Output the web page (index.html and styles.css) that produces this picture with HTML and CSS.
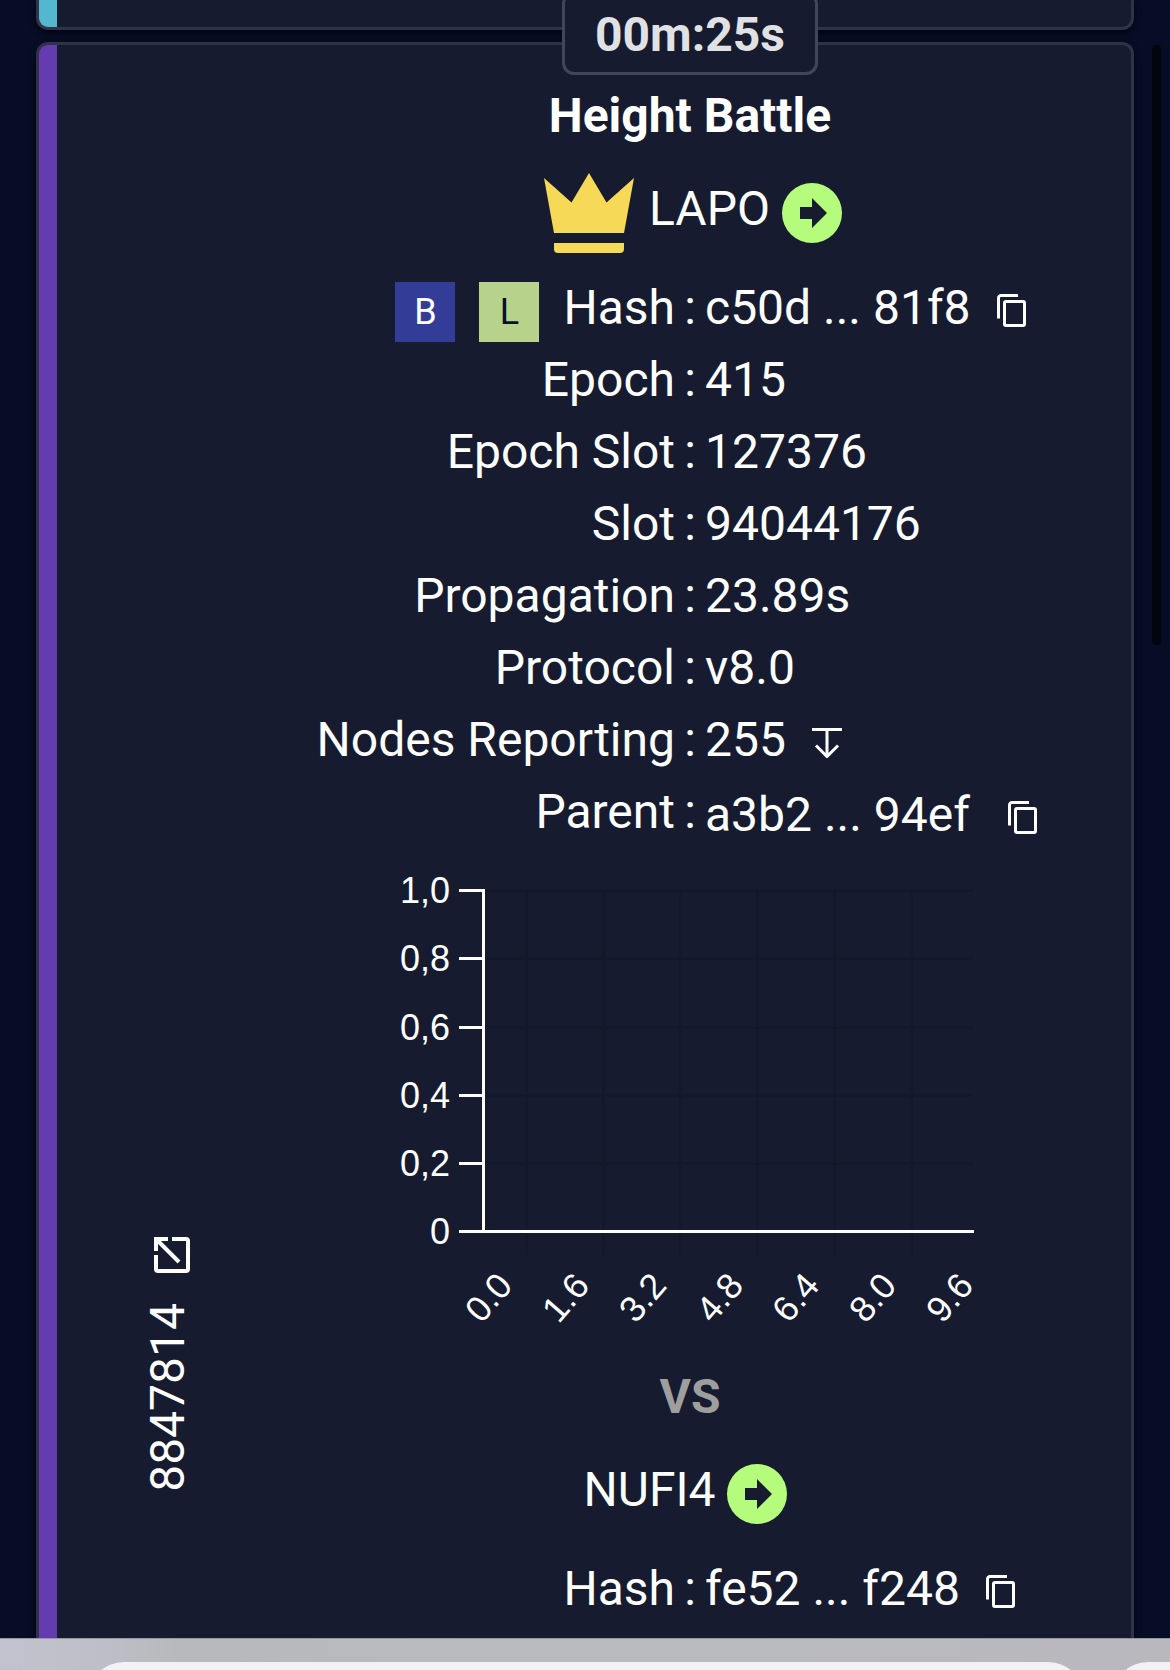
FILE: index.html
```html
<!DOCTYPE html>
<html lang="en">
<head>
  <meta charset="UTF-8" />
  <meta name="viewport" content="width=device-width, initial-scale=1.0"/>
  <title>Height Battle</title>
  <link rel="stylesheet" href="styles.css">
</head>
<body>

<!-- shared icons -->
<svg class="sprite" aria-hidden="true">
  <symbol id="icon-copy" viewBox="0 0 30 34">
    <path d="M21 1.5H4A2.5 2.5 0 0 0 1.5 4V24.5" fill="none" stroke="currentColor" stroke-width="3"/>
    <rect x="7.5" y="7.5" width="20" height="24" rx="1.5" fill="none" stroke="currentColor" stroke-width="3"/>
  </symbol>
  <symbol id="icon-arrow" viewBox="0 0 60 60">
    <circle cx="30" cy="30" r="30" fill="#b5fc7c"/>
    <path d="M18 24H30V15L45 30L30 45V36H18Z" fill="#161b2f"/>
  </symbol>
</svg>

<main class="feed">
  <article class="card card-prev"></article>

  <article class="card card-battle">
    <aside class="block-side">
      <a class="block-link" href="#8847814">
        <svg class="icon-open" viewBox="0 0 36 36" aria-hidden="true">
          <path d="M18 2H32A2 2 0 0 1 34 4V32A2 2 0 0 1 32 34H4A2 2 0 0 1 2 32V18" fill="none" stroke="currentColor" stroke-width="4"/>
          <path d="M14 2H2V14M3 3L25 25" fill="none" stroke="currentColor" stroke-width="4"/>
        </svg>
        <span class="block-number">8847814</span>
      </a>
    </aside>

    <div class="battle">
      <div class="timer">00m:25s</div>
      <h1 class="title">Height Battle</h1>

      <div class="pool">
        <svg class="crown" viewBox="0 0 90 80" aria-hidden="true">
          <path d="M0 5L27.5 29.5L45 0L62.5 29.5L90 5L80 60H10Z" fill="#f6d957"/>
          <path d="M10 70H80V76A4 4 0 0 1 76 80H14A4 4 0 0 1 10 76Z" fill="#f6d957"/>
        </svg>
        <span class="pool-name">LAPO</span>
        <a class="pool-link" href="#lapo" aria-label="Open LAPO"><svg><use href="#icon-arrow"/></svg></a>
      </div>

      <dl class="details">
        <div class="row">
          <dt><span class="badges"><span class="badge badge-b">B</span><span class="badge badge-l">L</span></span>Hash</dt>
          <dd>c50d ... 81f8 <button class="icon-btn" type="button" aria-label="Copy hash"><svg class="icon-copy"><use href="#icon-copy"/></svg></button></dd>
        </div>
        <div class="row"><dt>Epoch</dt><dd>415</dd></div>
        <div class="row"><dt>Epoch Slot</dt><dd>127376</dd></div>
        <div class="row"><dt>Slot</dt><dd>94044176</dd></div>
        <div class="row"><dt>Propagation</dt><dd>23.89s</dd></div>
        <div class="row"><dt>Protocol</dt><dd>v8.0</dd></div>
        <div class="row">
          <dt>Nodes Reporting</dt>
          <dd>255
            <button class="icon-btn" type="button" aria-label="Show nodes">
              <svg class="icon-down" viewBox="0 0 30 30">
                <path d="M0 1.5H30M15 2V28M4 17.5L15 28.5L26 17.5" fill="none" stroke="currentColor" stroke-width="3"/>
              </svg>
            </button>
          </dd>
        </div>
        <div class="row row-parent">
          <dt>Parent</dt>
          <dd>a3b2 ... 94ef <button class="icon-btn" type="button" aria-label="Copy parent"><svg class="icon-copy"><use href="#icon-copy"/></svg></button></dd>
        </div>
      </dl>

      <svg class="chart" viewBox="0 0 600 513" role="img" aria-label="Propagation chart">
        <g class="grid">
          <path d="M95 42.5H583M95 110.5H583M95 179.5H583M95 247.5H583M95 315.5H583"/>
          <path d="M136.5 42V407M213.5 42V407M290.5 42V407M367.5 42V407M444.5 42V407M521.5 42V407"/>
        </g>
        <path class="axis" d="M69 42.5H95M69 110.5H95M69 179.5H95M69 247.5H95M69 315.5H95M69 383.5H584M93.5 41V385"/>
        <g class="y-labels">
          <text x="60" y="55">1,0</text>
          <text x="60" y="123">0,8</text>
          <text x="60" y="192">0,6</text>
          <text x="60" y="260">0,4</text>
          <text x="60" y="328">0,2</text>
          <text x="60" y="396">0</text>
        </g>
        <g class="x-labels">
          <text transform="translate(98 449) rotate(-49)" y="13">0.0</text>
          <text transform="translate(175 449) rotate(-49)" y="13">1.6</text>
          <text transform="translate(252 449) rotate(-49)" y="13">3.2</text>
          <text transform="translate(329 449) rotate(-49)" y="13">4.8</text>
          <text transform="translate(405 449) rotate(-49)" y="13">6.4</text>
          <text transform="translate(482 449) rotate(-49)" y="13">8.0</text>
          <text transform="translate(559 449) rotate(-49)" y="13">9.6</text>
        </g>
      </svg>

      <p class="versus">VS</p>

      <div class="pool">
        <span class="pool-name">NUFI4</span>
        <a class="pool-link" href="#nufi4" aria-label="Open NUFI4"><svg><use href="#icon-arrow"/></svg></a>
      </div>

      <dl class="details">
        <div class="row">
          <dt>Hash</dt>
          <dd>fe52 ... f248 <button class="icon-btn" type="button" aria-label="Copy hash"><svg class="icon-copy"><use href="#icon-copy"/></svg></button></dd>
        </div>
      </dl>
    </div>
  </article>

  <div class="scroll-thumb"></div>
</main>

<footer class="browser-bar">
  <div class="tab tab-current"></div>
  <div class="tab tab-next"></div>
</footer>

</body>
</html>
```
FILE: styles.css
```css
* { box-sizing: border-box; margin: 0; padding: 0; }

body {
  font-family: Roboto, sans-serif;
  font-size: 48px;
  line-height: 72px;
  background: #080d27;
  color: #fff;
  display: flex;
  flex-direction: column;
  height: 100vh;
  overflow: hidden;
}

svg { display: block; }

.sprite {
  position: absolute;
  width: 0;
  height: 0;
}

.feed {
  position: relative;
  flex: 1;
  min-height: 0;
  overflow: hidden;
  display: flex;
  flex-direction: column;
  gap: 12px;
  padding: 0 36px;
}

/* cards */
.card {
  background: #161b2f;
  border: 3px solid #2f3347;
  border-radius: 12px;
  box-shadow: 0 3px 6px #02040f;
}

.card-prev {
  flex: none;
  height: 30px;
  border-top: none;
  border-radius: 0 0 12px 12px;
  background: linear-gradient(to right, #54b7d0 18px, #161b2f 18px);
  background-origin: padding-box;
}

.card-battle {
  flex: 1;
  display: flex;
  border-bottom: none;
  border-radius: 12px 12px 0 0;
  background: linear-gradient(to right, #643cb0 18px, #161b2f 18px);
  background-origin: padding-box;
  padding-left: 18px;
}

/* block number on the left */
.block-side {
  width: 192px;
  flex: none;
  display: flex;
  flex-direction: column;
  justify-content: flex-end;
  align-items: center;
  padding: 0 0 146px 30px;
}

.block-link {
  color: inherit;
  text-decoration: none;
  display: flex;
  flex-direction: column;
  align-items: center;
  gap: 30px;
}

.icon-open {
  width: 44px;
  height: 36px;
  padding-left: 8px;
}

.block-number {
  writing-mode: vertical-rl;
  transform: rotate(180deg);
  line-height: 56px;
}

/* battle column */
.battle {
  position: relative;
  flex: 1;
  min-width: 0;
  padding-top: 35px;
}

.timer {
  position: absolute;
  left: 50%;
  bottom: 100%;
  transform: translate(-50%, 30px);
  width: 256px;
  padding: 12px 0 9px;
  background: #161b2f;
  border: 3px solid #42465a;
  border-radius: 12px;
  color: #e0e1e3;
  font-weight: 700;
  line-height: 56px;
  text-align: center;
}

.title {
  font-size: 48px;
  font-weight: 700;
  text-align: center;
}

.pool {
  display: flex;
  align-items: center;
  justify-content: center;
  height: 120px;
  padding-top: 2px;
}

.pool-name {
  padding-bottom: 8px;
}

.crown {
  width: 120px;
  height: 80px;
  padding: 0 15px;
}

.pool-link {
  margin: 0 9px 0 12px;
}

.pool-link svg {
  width: 60px;
  height: 60px;
}

.row {
  display: grid;
  grid-template-columns: 1fr 30px 1fr;
  height: 72px;
}

.row dt {
  grid-column: 1;
  display: flex;
  justify-content: flex-end;
  gap: 24px;
  white-space: nowrap;
}

.row::before {
  content: ":";
  grid-column: 2;
  grid-row: 1;
  text-align: center;
}

.row dd {
  grid-column: 3;
  display: flex;
  align-items: center;
  gap: 26px;
  white-space: nowrap;
}

.row-parent dd {
  gap: 38px;
  padding-top: 3px;
}

.badges {
  display: flex;
  align-items: flex-end;
  gap: 24px;
  padding-bottom: 2px;
}

.badge {
  width: 60px;
  font-size: 36px;
  line-height: 60px;
  text-align: center;
}

.badge-b { background: #333d98; }
.badge-l { background: #b7d38b; color: #0b1029; }

.icon-btn {
  background: none;
  border: none;
  color: inherit;
  padding-top: 5px;
  cursor: pointer;
}

.icon-copy {
  width: 30px;
  height: 34px;
}

.icon-down {
  width: 30px;
  height: 30px;
}

/* chart */
.chart {
  width: 600px;
  max-width: 100%;
  margin: 0 auto;
}

.grid path {
  stroke: #13182b;
  stroke-width: 3;
}

.axis {
  fill: none;
  stroke: #fff;
  stroke-width: 3;
}

.chart text {
  fill: #fff;
  font-family: "Liberation Sans", sans-serif;
  font-size: 36px;
}

.y-labels { text-anchor: end; }
.x-labels { text-anchor: middle; }

.versus {
  color: #9e9e9e;
  font-weight: 700;
  text-align: center;
}

.scroll-thumb {
  position: absolute;
  top: 45px;
  right: 9px;
  width: 9px;
  height: 600px;
  border-radius: 5px;
  background: #02040f;
}

/* browser toolbar */
.browser-bar {
  flex: none;
  display: flex;
  gap: 28px;
  height: 32px;
  padding: 23px 0 0 88px;
  overflow: hidden;
  border-top: 1px solid #97979e;
  background: linear-gradient(to right, #c2c2ce 0, #c0c0cb 70px, #b8b9bd 180px, #b9babe 50%, #b8b8be);
}

.tab {
  height: 80px;
  border-radius: 36px;
  background: #f2f2f5;
}

.tab-current { flex: 1; }

.tab-next {
  width: 58px;
  border-radius: 36px 0 0 36px;
}
```
